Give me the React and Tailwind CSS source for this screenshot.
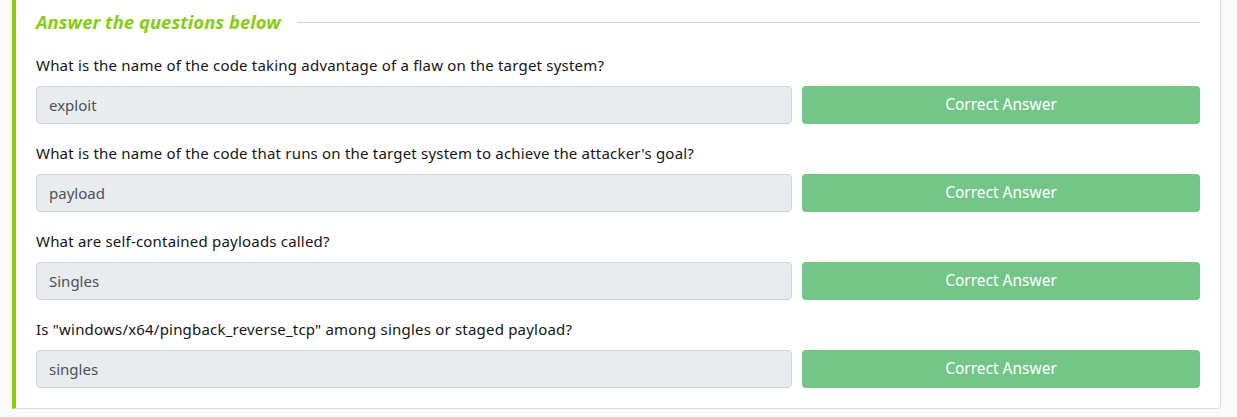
export default function App() {
  const rows = [
    ["What is the name of the code taking advantage of a flaw on the target system?", "exploit"],
    ["What is the name of the code that runs on the target system to achieve the attacker's goal?", "payload"],
    ["What are self-contained payloads called?", "Singles"],
    ['Is "windows/x64/pingback_reverse_tcp" among singles or staged payload?', "singles"],
  ];
  return (
    <div className="w-[1237px] h-[417px] bg-[#f9f9f9] pl-3 pr-4 overflow-hidden" style={{ fontFamily: '"Noto Sans", sans-serif' }}>
      <div className="bg-white border-l-4 border-l-[#88cc14] border-r border-b border-[#dcdcdc] rounded-br-[4px] pl-5 pr-5 pt-[10px] pb-5">
        <div className="flex items-center h-6">
          <h3 className="text-[18.5px] font-bold italic text-[#88cc14] leading-6 whitespace-nowrap">Answer the questions below</h3>
          <div className="flex-1 h-px bg-[#d5d5d5] ml-4"></div>
        </div>
        <div className="flex flex-col gap-[0px] pt-[2px]">
          {rows.map(([q, a], i) => (
            <div key={i} className="pt-[18px]">
              <p className="text-[15px] tracking-[0.2px] leading-[22px] text-[#151515] mb-[10px]">{q}</p>
              <div className="flex gap-[10px]">
                <div className="w-[756px] h-[38px] bg-[#e9ecef] border border-[#ced4da] rounded-[4px] flex items-center px-3 text-[15px] text-[#495057]">{a}</div>
                <div className="flex-1 h-[38px] bg-[#73c687] rounded-[4px] flex items-center justify-center text-[15.5px] text-white">Correct Answer</div>
              </div>
            </div>
          ))}
        </div>
      </div>
    </div>
  );
}
